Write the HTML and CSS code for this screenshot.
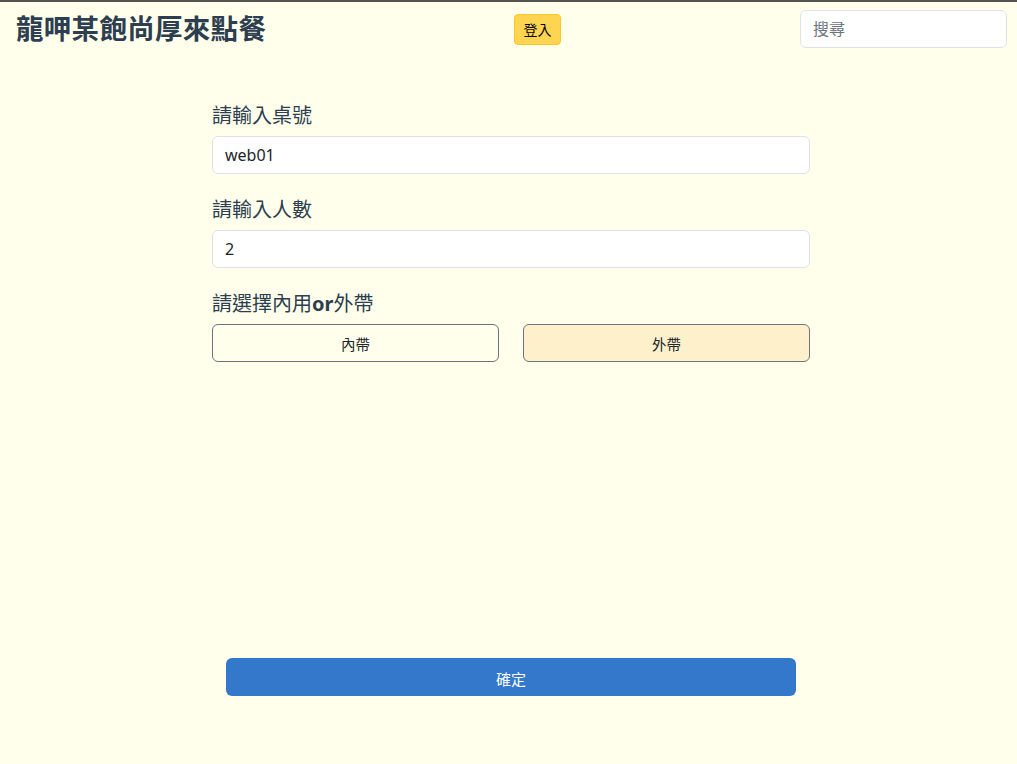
FILE: index.html
```html
<!DOCTYPE html>
<html lang="zh-Hant">
<head>
<meta charset="utf-8">
<title>龍呷某飽尚厚來點餐</title>
<link rel="stylesheet" href="styles.css">
</head>
<body>
<header class="topbar">
  <div class="brand">龍呷某飽尚厚來點餐</div>
  <button class="btn-login" type="button">登入</button>
  <input class="search" type="text" placeholder="搜尋">
</header>
<main class="order">
  <form class="order-form">
    <div class="group">
      <label class="form-label">請輸入桌號</label>
      <input class="form-control" type="text" value="web01">
    </div>
    <div class="group">
      <label class="form-label">請輸入人數</label>
      <input class="form-control" type="text" value="2">
    </div>
    <div class="group">
      <label class="form-label">請選擇內用<b>or</b>外帶</label>
      <div class="choice">
        <button class="btn-choice" type="button">內帶</button>
        <button class="btn-choice active" type="button">外帶</button>
      </div>
    </div>
    <div class="submit-row">
      <button class="btn-confirm" type="button">確定</button>
    </div>
  </form>
</main>
</body>
</html>
```

FILE: styles.css
```css
* { box-sizing: border-box; }
html, body { height: 100%; }
body {
  margin: 0;
  background: #ffffeb;
  border-top: 2px solid #55554f;
  font-family: "Noto Sans", "Noto Sans CJK TC", sans-serif;
  color: #2c3e50;
}
.topbar {
  display: flex;
  align-items: center;
  padding: 8px 10px 0 16px;
}
.brand {
  width: 498px;
  font-size: 27.5px;
  font-weight: 700;
  line-height: 38px;
  color: #2c3e50;
  letter-spacing: 0.3px;
}
.btn-login {
  width: 47px;
  height: 31px;
  padding: 0;
  background: #ffd451;
  border: 1px solid #ffc720;
  border-radius: 4px;
  font-family: inherit;
  font-size: 14px;
  color: #000;
}
.search {
  margin-left: auto;
  width: 207px;
  height: 38px;
  padding: 6px 12px;
  border: 1px solid #dee2e6;
  border-radius: 6px;
  background: #fff;
  font-family: inherit;
  font-size: 16px;
  color: #212529;
}
.search::placeholder { color: #6c757d; }
.order { padding: 0 0 0 212px; }
.order-form {
  width: 598px;
  padding-top: 56px;
}
.group { margin-bottom: 24px; }
.form-label {
  display: block;
  font-size: 20px;
  line-height: 24px;
  margin-bottom: 8px;
  color: #2c3e50;
}
.form-label b { font-weight: 700; }
.form-control {
  display: block;
  width: 100%;
  height: 38px;
  padding: 6px 12px;
  border: 1px solid #dee2e6;
  border-radius: 6px;
  background: #fff;
  font-family: inherit;
  font-size: 16px;
  color: #212529;
}
.choice {
  display: grid;
  grid-template-columns: 1fr 1fr;
  column-gap: 24px;
}
.btn-choice {
  height: 38px;
  border: 1px solid #6c757d;
  border-radius: 6px;
  background: transparent;
  font-family: inherit;
  font-size: 14.5px;
  color: #212529;
}
.btn-choice.active { background: #fff0cc; }
.submit-row {
  padding: 272px 14px 0;
}
.btn-confirm {
  display: block;
  width: 100%;
  height: 38px;
  padding-top: 3px;
  border: none;
  border-radius: 6px;
  background: #3478cc;
  color: #fff;
  font-family: inherit;
  font-size: 15px;
}
```
